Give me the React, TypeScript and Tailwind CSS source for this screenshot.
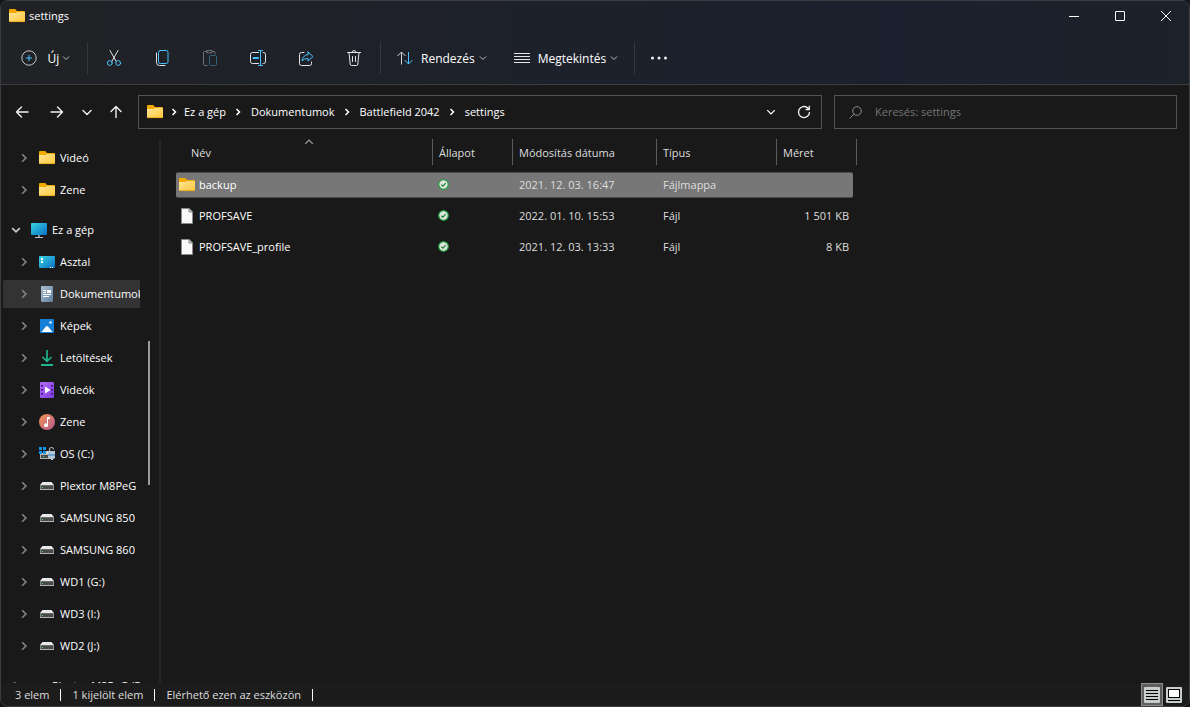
import { useState } from 'react'
import type { ReactNode } from 'react'
import clsx from 'clsx'

interface TreeItem {
  id: string
  label: string
  icon?: ReactNode
  root?: boolean
  spaced?: boolean
}

interface FileRow {
  name: string
  date: string
  type: string
  size: string
  folder?: boolean
}

function Chevron({ dir = 'down', size = 8, className }: { dir?: 'down' | 'up' | 'right'; size?: number; className?: string }) {
  const d = { down: 'M1 2.5 4 5.5 7 2.5', up: 'M1 5.5 4 2.5 7 5.5', right: 'M2.5 1 5.5 4 2.5 7' }[dir]
  return (
    <svg width={size} height={size} viewBox="0 0 8 8" fill="none" stroke="currentColor" className={clsx('shrink-0', className)} aria-hidden="true">
      <path d={d} />
    </svg>
  )
}

function FolderIcon() {
  return (
    <svg width="16" height="16" viewBox="0 0 16 16" className="shrink-0" aria-hidden="true">
      <defs>
        <linearGradient id="folder" x1="0" y1="0" x2="1" y2="1">
          <stop offset="0" stopColor="#ffe69a" />
          <stop offset="1" stopColor="#ffc838" />
        </linearGradient>
      </defs>
      <path d="M0 2A1 1 0 0 1 1 1h5.200L8 3h7a1 1 0 0 1 1 1v9H0z" fill="#f2a900" />
      <path d="M0 5h6.500L8 4h7a1 1 0 0 1 1 1v8a1 1 0 0 1-1 1H1a1 1 0 0 1-1-1z" fill="url(#folder)" />
      <path d="M.5 13.600h15" stroke="#e8a213" strokeWidth=".8" />
    </svg>
  )
}

function FileIcon() {
  return (
    <svg width="16" height="16" viewBox="0 0 16 16" className="shrink-0" aria-hidden="true">
      <path d="M2.500.5h7.500l3.500 3.500v11.500h-11z" fill="#fafafa" stroke="#8a8a8a" />
      <path d="M10 .5V4h3.500" fill="#c8c8c8" stroke="#8a8a8a" />
    </svg>
  )
}

function SyncedIcon() {
  return (
    <svg width="11" height="11" viewBox="0 0 11 11" role="img" aria-label="Elérhető ezen az eszközön">
      <circle cx="5.500" cy="5.500" r="4.800" fill="#dce4dc" stroke="#1f9a3c" strokeWidth="1.200" />
      <path d="M3.300 5.700 4.900 7.200 7.700 4.200" fill="none" stroke="#1c7f34" strokeWidth="1.200" />
    </svg>
  )
}

function PcIcon() {
  return (
    <svg width="16" height="16" viewBox="0 0 16 16" className="shrink-0" aria-hidden="true">
      <defs>
        <linearGradient id="pc" x1="0" y1="0" x2="1" y2="1">
          <stop offset="0" stopColor="#38d6e0" />
          <stop offset="1" stopColor="#0a6cc4" />
        </linearGradient>
      </defs>
      <rect x="0" y="1" width="16" height="12" rx=".8" fill="url(#pc)" />
      <path d="M7 13h2v2H7z" fill="#7d8790" />
      <path d="M4 15h8v1H4z" fill="#b9c0c6" />
    </svg>
  )
}

function DesktopIcon() {
  return (
    <svg width="16" height="16" viewBox="0 0 16 16" className="shrink-0" aria-hidden="true">
      <rect x="0" y="2" width="16" height="12" rx="1" fill="url(#pc)" />
      <path d="M2 4h2v2H2zM2 7h2v2H2zM11 13h1v1h-1zM13 13h1v1h-1z" fill="#fff" />
    </svg>
  )
}

function DocumentsIcon() {
  return (
    <svg width="16" height="16" viewBox="0 0 16 16" className="shrink-0" aria-hidden="true">
      <defs>
        <linearGradient id="docs" x1="0" y1="0" x2="1" y2="1">
          <stop offset="0" stopColor="#a9bfd3" />
          <stop offset="1" stopColor="#5f7f9f" />
        </linearGradient>
      </defs>
      <rect x="2" y="0" width="12" height="16" rx="1" fill="url(#docs)" />
      <path d="M4 4h3v1H4zM4 6h3v1H4zM8 4h4v3H8zM4 8h8v1H4zM4 10h6v1H4z" fill="#fff" />
    </svg>
  )
}

function PicturesIcon() {
  return (
    <svg width="16" height="16" viewBox="0 0 16 16" className="shrink-0" aria-hidden="true">
      <rect x="1" y="1" width="14" height="14" rx="1" fill="#1680d8" />
      <path d="M2.500 14 7 8.500q1-1 2 0l4.500 5.500z" fill="#fff" />
      <circle cx="11.500" cy="4.500" r="1.300" fill="#d3ecff" />
    </svg>
  )
}

function DownloadsIcon() {
  return (
    <svg width="16" height="16" viewBox="0 0 16 16" fill="none" stroke="#1fb590" className="shrink-0" aria-hidden="true">
      <path d="M8 0v11M3.500 7 8 11.300 12.500 7" strokeWidth="1.700" />
      <path d="M2 15h12" strokeWidth="2" />
    </svg>
  )
}

function VideosIcon() {
  return (
    <svg width="16" height="16" viewBox="0 0 16 16" className="shrink-0" aria-hidden="true">
      <defs>
        <linearGradient id="video" x1="0" y1="0" x2="1" y2="1">
          <stop offset="0" stopColor="#b36cf5" />
          <stop offset="1" stopColor="#7d3be0" />
        </linearGradient>
      </defs>
      <rect x="1" y="0" width="14" height="16" rx="1" fill="url(#video)" />
      <path d="M2 3h2v1.500H2zM2 7h2v1.500H2zM2 11h2v1.500H2zM12 3h2v1.500h-2zM12 7h2v1.500h-2zM12 11h2v1.500h-2z" fill="#3c1278" />
      <path d="M6 4.500v7l5.500-3.500z" fill="#fff" />
    </svg>
  )
}

function MusicIcon() {
  return (
    <svg width="16" height="16" viewBox="0 0 16 16" className="shrink-0" aria-hidden="true">
      <defs>
        <linearGradient id="music" x1="0" y1="0" x2="1" y2="1">
          <stop offset="0" stopColor="#f29455" />
          <stop offset="1" stopColor="#b4588f" />
        </linearGradient>
      </defs>
      <circle cx="8" cy="8" r="8" fill="url(#music)" />
      <path d="M8 3h3v2H9v6.200a2 1.800 0 1 1-1-1.500z" fill="#fff" />
    </svg>
  )
}

function DriveIcon() {
  return (
    <svg width="16" height="16" viewBox="0 0 16 16" className="shrink-0" aria-hidden="true">
      <path d="M3.500 4h9L15 7H1z" fill="#e8e8e8" />
      <path d="M1 7h14v5H1z" fill="#8a8a8a" />
      <path d="M2 7.500h12V11H2z" fill="#4a4a4a" />
      <path d="M1 11h14v1H1z" fill="#b4b4b4" />
      <path d="M3 9h1v1H3z" fill="#4be05a" />
    </svg>
  )
}

function SystemDriveIcon() {
  return (
    <svg width="16" height="16" viewBox="0 0 16 16" className="shrink-0" aria-hidden="true">
      <path d="M8 5h4l3 3H1z" fill="#d9d9d9" />
      <path d="M1 8h14v5H1z" fill="#b4b4b4" />
      <path d="M2 9h9v3H2z" fill="#4a4a4a" />
      <path d="M4 10h1v1H4z" fill="#4be05a" />
      <path d="M0 1h3v3H0zM4 1h3v3H4zM0 5h3v3H0zM4 5h3v3H4z" fill="#1593e6" />
      <path d="M10.500 6V3.500a2 2 0 0 1 4 0" fill="none" stroke="#aeb4ba" strokeWidth="1.200" />
      <path d="M9 5h7v7l-2 1v1h-2v-1l-3-1z" fill="#b3c6d6" />
      <path d="M9 8h7v2H9z" fill="#6fa6cf" />
    </svg>
  )
}

const TREE: TreeItem[] = [
  { id: 'q-video', label: 'Videó', icon: <FolderIcon /> },
  { id: 'q-zene', label: 'Zene', icon: <FolderIcon /> },
  { id: 'pc', label: 'Ez a gép', icon: <PcIcon />, root: true, spaced: true },
  { id: 'desktop', label: 'Asztal', icon: <DesktopIcon /> },
  { id: 'docs', label: 'Dokumentumok', icon: <DocumentsIcon /> },
  { id: 'pictures', label: 'Képek', icon: <PicturesIcon /> },
  { id: 'downloads', label: 'Letöltések', icon: <DownloadsIcon /> },
  { id: 'videos', label: 'Videók', icon: <VideosIcon /> },
  { id: 'music', label: 'Zene', icon: <MusicIcon /> },
  { id: 'c', label: 'OS (C:)', icon: <SystemDriveIcon /> },
  { id: 'plextor', label: 'Plextor M8PeG', icon: <DriveIcon /> },
  { id: 's850', label: 'SAMSUNG 850', icon: <DriveIcon /> },
  { id: 's860', label: 'SAMSUNG 860', icon: <DriveIcon /> },
  { id: 'g', label: 'WD1 (G:)', icon: <DriveIcon /> },
  { id: 'i', label: 'WD3 (I:)', icon: <DriveIcon /> },
  { id: 'j', label: 'WD2 (J:)', icon: <DriveIcon /> },
  { id: 'plextor-root', label: 'Plextor M8PeG (F:)', root: true, spaced: true },
]

const FILES: FileRow[] = [
  { name: 'backup', date: '2021. 12. 03. 16:47', type: 'Fájlmappa', size: '', folder: true },
  { name: 'PROFSAVE', date: '2022. 01. 10. 15:53', type: 'Fájl', size: '1 501 KB' },
  { name: 'PROFSAVE_profile', date: '2021. 12. 03. 13:33', type: 'Fájl', size: '8 KB' },
]

const PATH = ['Ez a gép', 'Dokumentumok', 'Battlefield 2042', 'settings']

function TitleBar() {
  return (
    <header className="mb-[2px] flex h-[29px] items-center justify-between">
      <h1 className="flex items-center gap-1 pl-2">
        <FolderIcon />
        settings
      </h1>
      <div className="flex h-full">
        <button aria-label="Kis méret" className="flex w-[46px] items-center justify-center">
          <svg width="10" height="10" stroke="#fff"><path d="M0 5.500h10" /></svg>
        </button>
        <button aria-label="Teljes méret" className="flex w-[46px] items-center justify-center">
          <svg width="10" height="10" fill="none" stroke="#fff"><rect x=".5" y=".5" width="9" height="9" rx=".5" /></svg>
        </button>
        <button aria-label="Bezárás" className="flex w-[46px] items-center justify-center">
          <svg width="10" height="10" stroke="#fff"><path d="M0 0 10 10M10 0 0 10" /></svg>
        </button>
      </div>
    </header>
  )
}

function ToolButton({ label, disabled, children }: { label: string; disabled?: boolean; children: ReactNode }) {
  return (
    <button aria-label={label} disabled={disabled} className="flex h-8 w-12 shrink-0 items-center justify-center disabled:opacity-40">
      <svg width="16" height="16" viewBox="0 0 16 16" fill="none" stroke="#e4e4e4" strokeLinecap="round" strokeLinejoin="round">
        {children}
      </svg>
    </button>
  )
}

function Toolbar() {
  return (
    <div role="toolbar" aria-label="Parancssáv" className="flex h-[53px] items-center border-b border-[#3c3c3c] text-[12px]">
      <button className="flex h-8 w-[86px] shrink-0 items-center pl-[20px]">
        <svg width="16" height="16" viewBox="0 0 16 16" fill="none" stroke="#c4c4c4" className="shrink-0" aria-hidden="true">
          <circle cx="8" cy="8" r="7.200" />
          <path d="M8 4.800v6.400M4.800 8h6.400" stroke="#4cc2ff" />
        </svg>
        <span className="ml-[8px] w-[17px] pt-px">Új</span>
        <Chevron className="text-[#c0c0c0]" />
      </button>
      <div className="mr-[2px] h-8 w-px shrink-0 bg-[#34373b]" />
      <ToolButton label="Kivágás">
        <path d="M4 .5 10.200 11.500M12 .5 5.800 11.500" />
        <circle cx="3.800" cy="13" r="2.400" stroke="#4cc2ff" />
        <circle cx="12.200" cy="13" r="2.400" stroke="#4cc2ff" />
      </ToolButton>
      <ToolButton label="Másolás">
        <path d="M2.500 3v9.500a3 3 0 0 0 3 3H11" />
        <rect x="4.500" y=".5" width="9.500" height="13" rx="1.800" stroke="#4cc2ff" />
      </ToolButton>
      <ToolButton label="Beillesztés" disabled>
        <path d="M5 15.500H2.500a1 1 0 0 1-1-1v-12a1 1 0 0 1 1-1H5m5 0h2a1 1 0 0 1 1 1V4M5 .5h5v2.300H5z" />
        <rect x="7.500" y="5.500" width="7" height="10" rx="1" stroke="#4cc2ff" />
      </ToolButton>
      <ToolButton label="Átnevezés">
        <path d="M8.500 2.500h-6a2 2 0 0 0-2 2v7a2 2 0 0 0 2 2h6M13 2.500h.500a2 2 0 0 1 2 2v7a2 2 0 0 1-2 2H13" />
        <path d="M10.500.5v15M8.500.5h4M8.500 15.500h4" stroke="#4cc2ff" />
        <path d="M3.500 8h4.500" stroke="#4cc2ff" strokeWidth="2" />
      </ToolButton>
      <ToolButton label="Megosztás">
        <path d="M6 2.500H3.500a2 2 0 0 0-2 2v9a2 2 0 0 0 2 2h8a2 2 0 0 0 2-2V12" />
        <path d="M10 2l5 4.500-5 4.500V8.500c-3 0-4.500 1-6 2.500.300-3.500 2.500-6 6-6.500z" stroke="#4cc2ff" />
      </ToolButton>
      <ToolButton label="Törlés">
        <path d="M1.500 2.500h13M3 2.500l1.200 11.500a1.500 1.500 0 0 0 1.500 1.500h4.600a1.500 1.500 0 0 0 1.500-1.500L13 2.500M6 2.500a2 2 0 0 1 4 0M6.500 6.500v5M9.500 6.500v5" />
      </ToolButton>
      <div className="ml-[2px] h-8 w-px shrink-0 bg-[#34373b]" />
      <button className="flex h-8 shrink-0 items-center gap-1 pr-[11px] pl-4">
        <svg width="16" height="16" viewBox="0 0 16 16" fill="none" stroke="#d8d8d8" aria-hidden="true">
          <path d="M4.500 14.500v-12M.5 6l4-4 4 4" />
          <path d="M11.500 2v12M7.500 10l4 4 4-4" stroke="#4cc2ff" />
        </svg>
        <span className="ml-1 pt-px">Rendezés</span>
        <Chevron className="text-[#c0c0c0]" />
      </button>
      <button className="flex h-8 shrink-0 items-center gap-1 px-4">
        <svg width="16" height="16" viewBox="0 0 16 16" stroke="#e4e4e4" aria-hidden="true">
          <path d="M0 3.500h16M0 6.500h16M0 9.500h16M0 12.500h16" />
        </svg>
        <span className="ml-1 pt-px">Megtekintés</span>
        <Chevron className="text-[#c0c0c0]" />
      </button>
      <div className="h-8 w-px shrink-0 bg-[#34373b]" />
      <button aria-label="Továbbiak" className="flex h-8 w-12 shrink-0 items-center justify-center">
        <svg width="16" height="4" fill="#f0f0f0">
          <circle cx="1.500" cy="2" r="1.500" />
          <circle cx="8" cy="2" r="1.500" />
          <circle cx="14.500" cy="2" r="1.500" />
        </svg>
      </button>
    </div>
  )
}

function NavButton({ label, width, d }: { label: string; width: string; d: string }) {
  return (
    <button aria-label={label} className={clsx('flex h-8 items-center justify-center', width)}>
      <svg width="14" height="14" viewBox="0 0 14 14" fill="none" stroke="#f2f2f2" strokeWidth="1.400" strokeLinecap="round" strokeLinejoin="round">
        <path d={d} />
      </svg>
    </button>
  )
}

function AddressRow() {
  return (
    <div className="flex h-[50px] items-start pt-[10px] pr-3">
      <div className="flex h-[34px] shrink-0 items-center pr-[6px] pl-[3px]">
        <NavButton label="Vissza" width="w-[35px]" d="M13 7H1.500M6.500 2 1.500 7l5 5" />
        <NavButton label="Előre" width="w-[35px]" d="M1 7h11.500M7.500 2l5 5-5 5" />
        <NavButton label="Legutóbbi helyek" width="w-[26px]" d="M3 5.500 7 9.500l4-4" />
        <NavButton label="Fel" width="w-[32px]" d="M7 12.500V1.500M2 6.500l5-5 5 5" />
      </div>
      <div className="flex h-[34px] min-w-0 grow-[2] basis-0 items-center border border-[#535353] bg-[#191919]">
        <nav aria-label="Elérési út" className="flex grow items-center pl-2">
          <FolderIcon />
          {PATH.map((part, i) => (
            <span key={part} className="flex items-center">
              <span className={clsx('flex justify-center', i === 0 ? 'w-[21px]' : 'w-[25px]')}>
                <Chevron dir="right" className="[stroke-width:1.500]" />
              </span>
              <a href="#">{part}</a>
            </span>
          ))}
        </nav>
        <button aria-label="Előzmények" className="flex h-8 w-8 items-center justify-center">
          <Chevron size={10} />
        </button>
        <button aria-label="Frissítés" className="flex h-8 w-[34px] items-center justify-center">
          <svg width="14" height="14" viewBox="0 0 14 14" fill="none" stroke="#f0f0f0" strokeWidth="1.300">
            <path d="M12.500 7A5.500 5.500 0 1 1 10.500 2.800L12 4.200M12.300.8v3.700H8.600" />
          </svg>
        </button>
      </div>
      <label className="ml-3 flex h-[34px] min-w-0 grow basis-0 items-center border border-[#535353] bg-[#191919]">
        <svg width="13" height="13" viewBox="0 0 13 13" fill="none" stroke="#8a8a8a" className="mr-[13px] ml-[14px] shrink-0" aria-hidden="true">
          <circle cx="8" cy="5" r="4.300" />
          <path d="M5 8.200.5 12.500" />
        </svg>
        <input type="search" aria-label="Keresés" placeholder="Keresés: settings" className="min-w-0 grow bg-transparent outline-none placeholder:text-[#757575]" />
      </label>
    </div>
  )
}

function Sidebar() {
  const [current, setCurrent] = useState('docs')
  return (
    <aside className="mt-[5px] flex w-[160px] shrink-0 overflow-hidden border-r-2 border-[#272727] pt-[5px]">
      <nav aria-label="Navigációs ablak" className="w-[139px] shrink-0 overflow-hidden pl-[2px]">
        <ul className="space-y-1">
          {TREE.map(item => (
            <li
              key={item.id}
              className={clsx(
                'flex h-7 items-center overflow-hidden rounded-l-xs whitespace-nowrap',
                item.root ? 'pl-1' : 'pl-3',
                item.spaced && 'mt-3',
                item.id === current && 'bg-[#333333]'
              )}
            >
              <button aria-label={`${item.label} kibontása`} className="flex h-full w-[17px] shrink-0 items-center justify-center">
                <Chevron
                  dir={item.id === 'pc' ? 'down' : 'right'}
                  size={10}
                  className={clsx('[stroke-width:1.400]', item.id === 'pc' ? 'text-[#c8c8c8]' : 'text-[#808080]')}
                />
              </button>
              <a href="#" onClick={() => setCurrent(item.id)} className="ml-[7px] flex items-center gap-[5px]">
                {item.icon ?? <span className="w-4" />}
                {item.label}
              </a>
            </li>
          ))}
        </ul>
      </nav>
      <div className="mt-[197px] ml-2 h-36 w-[2px] bg-[#9a9a9a]" />
    </aside>
  )
}

function FileTable() {
  const [selected, setSelected] = useState('backup')
  const headCell = 'h-[28px] p-0 text-left align-top font-normal'
  const headInner = 'flex h-[26px] items-center border-r border-[#5c5c5c] pt-[3px]'
  return (
    <main className="min-w-0 grow overflow-hidden pl-[15px]">
      <table className="w-[681px] table-fixed border-separate border-spacing-x-0 border-spacing-y-[5px]">
        <colgroup>
          <col className="w-[257px]" />
          <col className="w-[80px]" />
          <col className="w-[144px]" />
          <col className="w-[120px]" />
          <col className="w-[76px]" />
          <col className="w-[4px]" />
        </colgroup>
        <thead className="text-[#dedede]">
          <tr>
            <th scope="col" aria-sort="ascending" className={headCell}>
              <div className={clsx(headInner, 'relative pl-[15px]')}>
                Név
                <Chevron dir="up" size={10} className="absolute -top-[2px] left-1/2 text-[#a0a0a0]" />
              </div>
            </th>
            <th scope="col" className={headCell}><div className={clsx(headInner, 'pl-[6px]')}>Állapot</div></th>
            <th scope="col" className={headCell}><div className={clsx(headInner, 'pl-[6px]')}>Módosítás dátuma</div></th>
            <th scope="col" className={headCell}><div className={clsx(headInner, 'pl-[6px]')}>Típus</div></th>
            <th scope="col" colSpan={2} className={headCell}><div className={clsx(headInner, 'pl-[6px]')}>Méret</div></th>
          </tr>
        </thead>
        <tbody>
          {FILES.map(file => {
            const cell = clsx('h-[26px] p-0', file.name === selected && 'border-y border-[#4a4a4a] bg-[#777777]')
            return (
              <tr key={file.name} aria-selected={file.name === selected} onClick={() => setSelected(file.name)}>
                <td className={clsx(cell, 'rounded-l-xs')}>
                  <div className="flex items-center gap-1 pl-[3px]">
                    {file.folder ? <FolderIcon /> : <FileIcon />}
                    {file.name}
                  </div>
                </td>
                <td className={cell}><div className="pl-[5px]"><SyncedIcon /></div></td>
                <td className={clsx(cell, 'text-[#dedede]')}><div className="pl-[6px]">{file.date}</div></td>
                <td className={clsx(cell, 'text-[#dedede]')}><div className="pl-[6px]">{file.type}</div></td>
                <td className={clsx(cell, 'rounded-r-xs text-[#dedede]')}><div className="pr-1 text-right">{file.size}</div></td>
                <td className="p-0" />
              </tr>
            )
          })}
        </tbody>
      </table>
    </main>
  )
}

function StatusBar() {
  return (
    <footer className="flex h-[23px] shrink-0 items-center bg-[#1c1c1c] pl-[14px] text-[#dedede]">
      <span className="border-r border-white pr-[11px] leading-3">3 elem</span>
      <span className="border-r border-white px-[11px] leading-3">1 kijelölt elem</span>
      <span className="border-r border-white px-[11px] leading-3">Elérhető ezen az eszközön</span>
      <div className="ml-auto flex h-full pr-1">
        <button aria-label="Részletek" className="flex w-[22px] items-center justify-center border border-[#8c8c8c] bg-[#5e5e5e]">
          <svg width="16" height="16">
            <rect width="16" height="16" rx="1" fill="#c9cdcb" />
            <path d="M2 3.500h12M2 6.500h12M2 9.500h12M2 12.500h12" stroke="#000" />
          </svg>
        </button>
        <button aria-label="Nagy ikonok" className="flex w-[22px] items-center justify-center">
          <svg width="16" height="16">
            <rect width="16" height="16" rx="1" fill="#c9cdcb" />
            <rect x="2.500" y="2.500" width="11" height="8" fill="#fff" stroke="#000" />
            <path d="M2 13.500h12" stroke="#000" />
          </svg>
        </button>
      </div>
    </footer>
  )
}

export default function App() {
  return (
    <div className="h-screen bg-[#14151b] font-['Open_Sans',sans-serif] text-[11px] leading-4 text-white">
      <div className="flex h-full flex-col overflow-hidden rounded-lg border border-[#3c3d40] bg-[#191919]">
        <div className="bg-linear-to-r from-[#202225] via-[#1b202e] via-75% to-[#1c222a]">
          <TitleBar />
          <Toolbar />
        </div>
        <AddressRow />
        <div className="flex min-h-0 grow">
          <Sidebar />
          <FileTable />
        </div>
        <StatusBar />
      </div>
    </div>
  )
}
